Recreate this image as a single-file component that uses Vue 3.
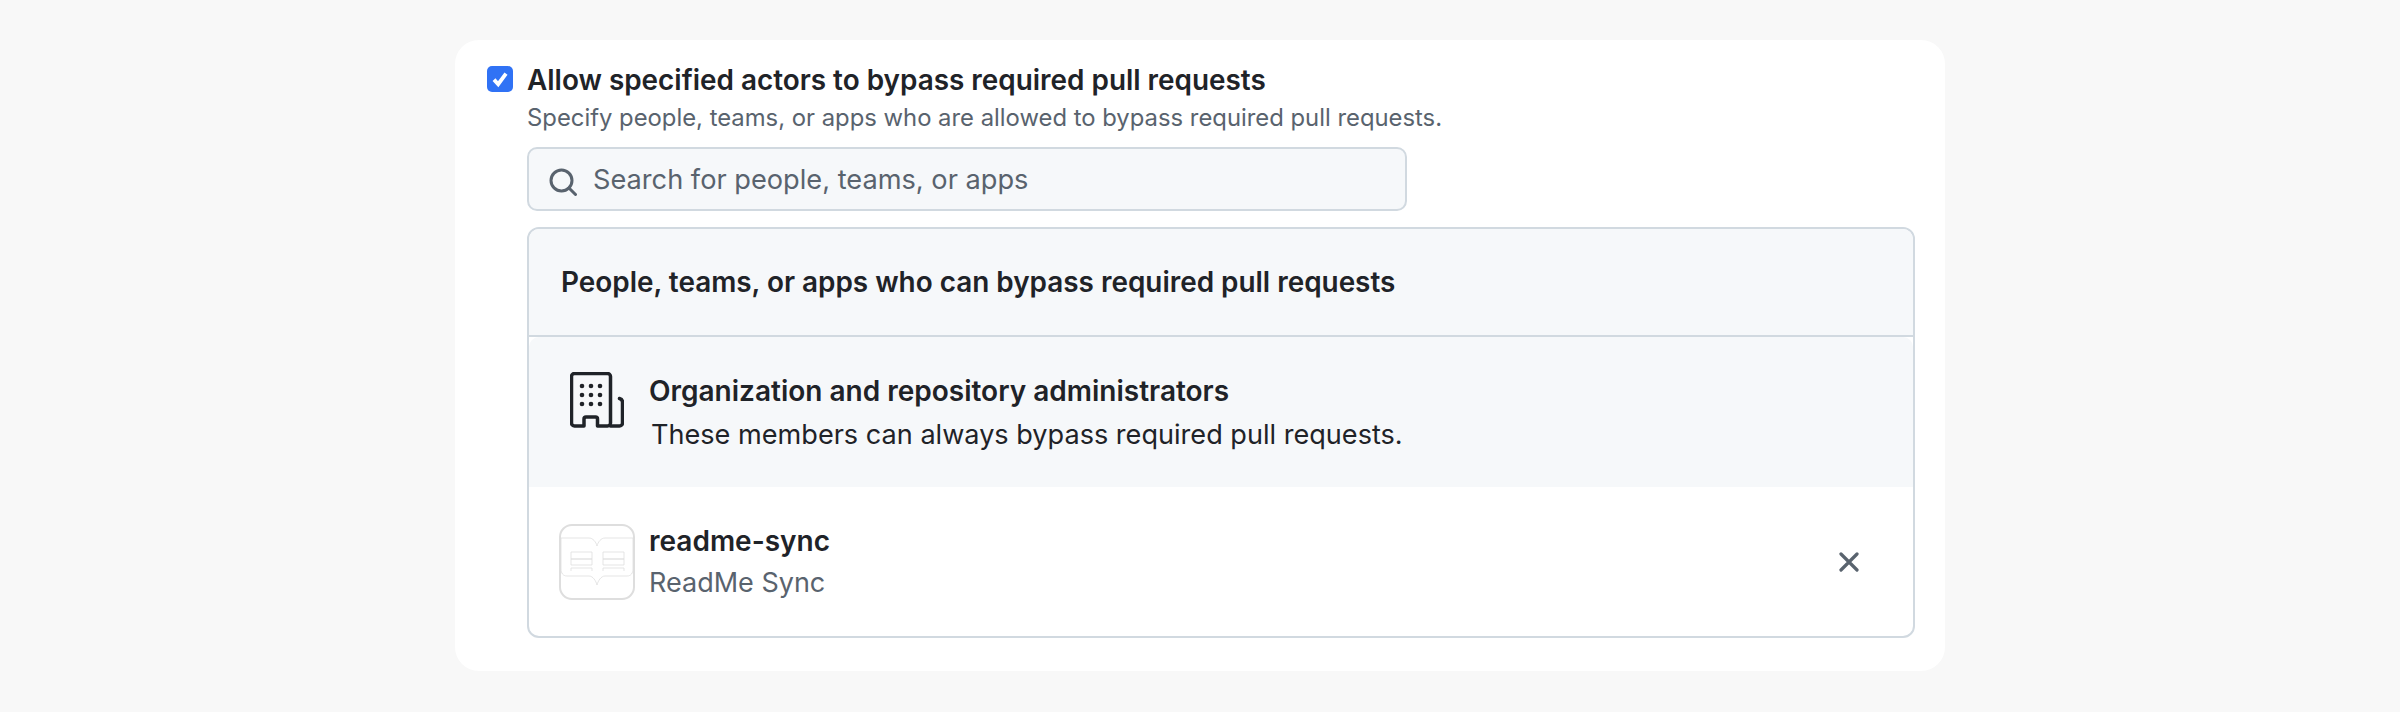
<template>
  <div class="page">
    <section class="card">
      <div class="option">
        <span class="check">
          <svg viewBox="0 0 26 26" width="26" height="26"><path d="M7 13.6l4.2 4.6L19 7.6" fill="none" stroke="#fff" stroke-width="3.8" /></svg>
        </span>
        <div class="option-body">
          <div class="option-title">Allow specified actors to bypass required pull requests</div>
          <div class="option-desc">Specify people, teams, or apps who are allowed to bypass required pull requests.</div>
          <div class="search">
            <svg class="search-icon" viewBox="0 0 28 28" width="28" height="28"><circle cx="12.5" cy="12.5" r="10.500" fill="none" stroke="#59636e" stroke-width="3" /><path d="M20 20l6.500 6.500" stroke="#59636e" stroke-width="3" stroke-linecap="round" /></svg>
            <input class="search-input" type="text" placeholder="Search for people, teams, or apps" />
          </div>
          <div class="panel">
            <div class="panel-head">People, teams, or apps who can bypass required pull requests</div>
            <div class="row row-admin">
              <svg class="org-icon" viewBox="0 0 54 56" width="54" height="56">
                <path d="M14 54H4.500a3 3 0 0 1-3-3V4.500a3 3 0 0 1 3-3h33a3 3 0 0 1 3 3V51a3 3 0 0 1-3 3H27.500v-7a2 2 0 0 0-2-2H16a2 2 0 0 0-2 2z" fill="none" stroke="#1f2328" stroke-width="3.500" stroke-linejoin="round" />
                <path d="M40.500 54h9a3 3 0 0 0 3-3V30.500a4 4 0 0 0-3-4" fill="none" stroke="#1f2328" stroke-width="3.500" stroke-linecap="round" />
                <g fill="#1f2328">
                  <circle v-for="d in dots" :key="d[0] + '-' + d[1]" :cx="d[0]" :cy="d[1]" r="2.300" />
                </g>
              </svg>
              <div class="row-text admin-text">
                <div class="row-name">Organization and repository administrators</div>
                <div class="row-note">These members can always bypass required pull requests.</div>
              </div>
            </div>
            <div class="row row-app">
              <div class="logo">
                <svg viewBox="0 0 76 76" width="76" height="76" fill="none" stroke="#dedede" stroke-width="0.800">
                  <path d="M2 14h28c4 0 7 4 8 8 1-4 4-8 8-8h28M2 14v31c0 4 2 7 6 7h22c4 0 7 5 8 9 1-4 4-9 8-9h22c4 0 6-3 6-7V14" />
                  <path d="M12 28h21v7H12zM12 35h21v6H12zM12 44h21M44 28h21v7H44zM44 35h21v6H44zM44 44h21M12 47v-3M33 47v-3M44 47v-3M65 47v-3" />
                </svg>
              </div>
              <div class="row-text app-text">
                <div class="row-name">readme-sync</div>
                <div class="app-sub">ReadMe Sync</div>
              </div>
              <button class="remove" type="button" aria-label="Remove">
                <svg viewBox="0 0 20 20" width="20" height="20"><path d="M2 2l16 16M18 2L2 18" stroke="#59636e" stroke-width="3.200" stroke-linecap="round" /></svg>
              </button>
            </div>
          </div>
        </div>
      </div>
    </section>
  </div>
</template>

<script setup>
const dots = []
for (const y of [14, 23, 32]) {
  for (const x of [12, 21, 30]) dots.push([x, y])
}
</script>

<style scoped>
.page {
  height: 712px;
  box-sizing: border-box;
  padding-top: 40px;
  background: #f8f8f8;
  font-family: Inter, "Liberation Sans", sans-serif;
  color: #1f2328;
}
.card {
  box-sizing: border-box;
  width: 1490px;
  height: 631px;
  margin: 0 auto;
  padding: 26px 30px 0 32px;
  background: #fff;
  border-radius: 24px;
}
.option {
  display: flex;
  gap: 14px;
}
.check {
  flex: none;
  width: 26px;
  height: 26px;
  border-radius: 5px;
  background: #3072f5;
}
.check svg {
  display: block;
}
.option-body {
  flex: 1;
  min-width: 0;
}
.option-title {
  font-size: 27.900px;
  font-weight: 600;
  line-height: 28px;
}
.option-desc {
  margin-top: 10px;
  font-size: 23.840px;
  line-height: 28px;
  color: #59636e;
}
.search {
  box-sizing: border-box;
  display: flex;
  align-items: center;
  gap: 16px;
  width: 880px;
  height: 64px;
  margin-top: 15px;
  padding: 0 20px;
  background: #f6f8fa;
  border: 2px solid #d1d9e0;
  border-radius: 10px;
}
.search-icon {
  flex: none;
  margin-top: 6px;
}
.search-input {
  flex: 1;
  min-width: 0;
  padding: 0;
  border: 0;
  outline: 0;
  background: transparent;
  font: inherit;
  font-size: 27.200px;
}
.search-input::placeholder {
  color: #59636e;
  opacity: 1;
}
.panel {
  box-sizing: border-box;
  height: 411px;
  margin-top: 16px;
  border: 2px solid #d1d9e0;
  border-radius: 12px;
  overflow: hidden;
}
.panel-head {
  box-sizing: border-box;
  height: 108px;
  padding: 0 32px;
  display: flex;
  align-items: center;
  background: #f6f8fa;
  border-bottom: 2px solid #d1d9e0;
  font-size: 27.900px;
  font-weight: 600;
}
.row {
  display: flex;
  padding: 0 32px 0 30px;
}
.row-admin {
  height: 150px;
  background: #f6f8fa;
  padding-top: 35px;
  padding-left: 41px;
  box-sizing: border-box;
  border-top-left-radius: 10px;
  border-top-right-radius: 10px;
  gap: 25px;
}
.org-icon {
  flex: none;
}
.admin-text {
  padding-top: 3px;
}
.row-name {
  font-size: 28px;
  font-weight: 600;
  line-height: 32px;
}
.row-note {
  margin-top: 12px;
  margin-left: 2px;
  font-size: 27.100px;
  line-height: 32px;
}
.row-app {
  align-items: center;
  height: 149px;
  gap: 14px;
}
.logo {
  flex: none;
  box-sizing: border-box;
  width: 76px;
  height: 76px;
  border: 2px solid #dedede;
  border-radius: 13px;
  overflow: hidden;
}
.logo svg {
  display: block;
  margin: -2px;
}
.app-text {
  flex: 1;
}
.app-sub {
  margin-top: 10px;
  font-size: 27px;
  line-height: 32px;
  color: #59636e;
}
.remove {
  padding: 0;
  margin-right: 22px;
  border: 0;
  background: none;
  line-height: 0;
}
</style>

<style>
body {
  background: #f8f8f8;
}
</style>
